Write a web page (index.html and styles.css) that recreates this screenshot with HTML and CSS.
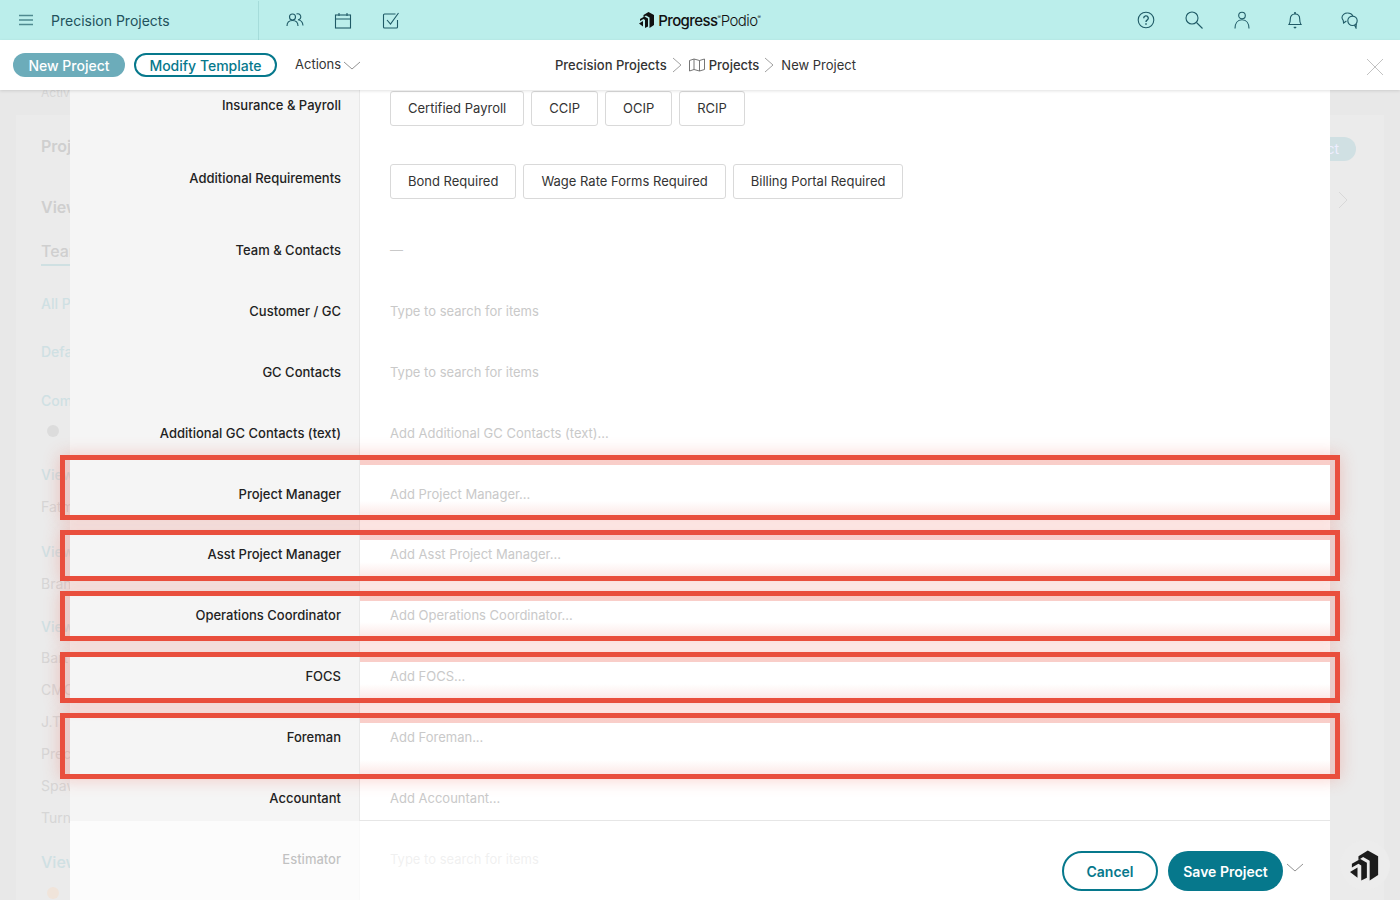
FILE: index.html
```html
<!DOCTYPE html>
<html lang="en">
<head>
    <meta name="viewport" content="width=device-width, initial-scale=1.0">
    <title>New Project</title>
    <link rel="stylesheet" href="styles.css">
</head>
<body>
    <div class="topbar">
        <div class="topbar-left">
            <div class="app-title">
                <svg class="ico" width="16" height="12" viewBox="0 0 16 12"><path d="M1 1.5h14M1 6h14M1 10.5h14" stroke="#4f8a90" stroke-width="1.6" fill="none"/></svg>
                <span>Precision Projects</span>
            </div>
            <div class="top-icons">
                <svg width="18" height="16" viewBox="0 0 18 16" fill="none" stroke="#1f5a66" stroke-width="1.1"><circle cx="6.5" cy="5" r="3"/><path d="M1 14c0-4 2-5.500 5.500-5.500S12 10 12 14"/><path d="M10.500 2.100a3 3 0 1 1 1.500 5.700c3 .4 4.700 2 5 5.700"/></svg>
                <svg width="18" height="17" viewBox="0 0 18 17" fill="none" stroke="#1f5a66" stroke-width="1.100"><rect x="1.500" y="3" width="15" height="13"/><path d="M1.500 7h15M5 1v3M13 1v3"/></svg>
                <svg width="18" height="17" viewBox="0 0 18 17" fill="none" stroke="#1f5a66" stroke-width="1.100"><path d="M15.500 8v7a1 1 0 0 1-1 1h-12a1 1 0 0 1-1-1V3a1 1 0 0 1 1-1h11"/><path d="M5 8l3.500 4L16.500 1"/></svg>
            </div>
        </div>
        <div class="brand">
            <svg width="16" height="16" viewBox="0 0 32 32"><path fill="#111" d="M9 6l10-6 11 6v20l-9 6V11L14 7l-5 3zM2 14l9-5 7 4v16l-6 3V16l-3-2-7 4zM0 23l8-5v11z"/></svg>
            <span class="brand-main">Progress</span><span class="brand-sup">&reg;</span><span class="brand-sub">Podio</span><span class="brand-sup light">&reg;</span>
        </div>
        <div class="top-right">
            <svg class="q" width="18" height="18" viewBox="0 0 18 18" fill="none" stroke="#1f5a66" stroke-width="1.100"><circle cx="9" cy="9" r="7.800"/><path d="M6.700 7.200a2.300 2.300 0 1 1 3.400 2c-.8.500-1.100.8-1.100 1.800" stroke-width="1.400"/><path d="M9 12.300v1.500" stroke-width="1.500"/></svg>
            <svg class="s" width="18" height="18" viewBox="0 0 18 18" fill="none" stroke="#1f5a66" stroke-width="1.100"><circle cx="7" cy="7" r="6"/><path d="M11.500 11.500l6 6"/></svg>
            <svg class="u" width="16" height="18" viewBox="0 0 16 18" fill="none" stroke="#1f5a66" stroke-width="1.100"><circle cx="8" cy="4.500" r="3.300"/><path d="M1 17.500c0-5 2.500-8.700 7-8.700s7 3.700 7 8.700"/></svg>
            <svg class="b" width="14" height="18" viewBox="0 0 14 18" fill="none" stroke="#1f5a66" stroke-width="1.100"><path d="M1 13.500c1.200-1.500 1.300-3 1.300-5.500C2.300 5 4 3 7 3s4.700 2 4.700 5c0 2.500.1 4 1.300 5.500z"/><path d="M7 1v2" stroke-width="1.600"/><path d="M5.800 15.800L7 17l1.200-1.200"/></svg>
            <svg class="c" width="18" height="17" viewBox="0 0 18 17" fill="none" stroke="#1f5a66" stroke-width="1.100"><path d="M6.500 1C3.500 1 1 3 1 5.500c0 1.200.5 2 1.200 2.800L2.600 11l2.800-2"/><path d="M6.500 1c2.500 0 4.500 1.200 5.300 3"/><circle cx="11.500" cy="8.800" r="4.700"/><path d="M13.500 13l1.500 3 .3-4"/></svg>
        </div>
    </div>

    <div class="subbar">
        <div class="sub-left">
            <button class="pill pill-muted">New Project</button>
            <button class="pill pill-outline">Modify Template</button>
            <div class="actions">
                <span>Actions</span>
                <svg width="16" height="9" viewBox="0 0 16 9" fill="none" stroke="#777" stroke-width=".8"><path d="M0 1l8 7 8-7"/></svg>
            </div>
        </div>
        <div class="crumbs">
            <span class="crumb-strong">Precision Projects</span>
            <svg class="crumb-sep" width="10" height="16" viewBox="0 0 10 16" fill="none" stroke="#888" stroke-width=".8"><path d="M1 1l8 7-8 7"/></svg>
            <svg width="16" height="14" viewBox="0 0 16 14" fill="none" stroke="#666" stroke-width=".9"><path d="M.5 2.500L5 1l5.500 1.500L15.500 1v10.500L10.500 13 5 11.500.5 13zM5 1v10.500M10.500 2.500V13"/></svg>
            <span class="crumb-strong">Projects</span>
            <svg class="crumb-sep" width="10" height="16" viewBox="0 0 10 16" fill="none" stroke="#888" stroke-width=".8"><path d="M1 1l8 7-8 7"/></svg>
            <span class="crumb-last">New Project</span>
        </div>
        <svg class="close" width="16" height="16" viewBox="0 0 16 16" stroke="#bbb" stroke-width=".9"><path d="M0 0l16 16M16 0L0 16"/></svg>
    </div>

    <div class="under">
        <p class="u-active">Active</p>
        <p class="u-h u-proj">Project</p>
        <p class="u-h u-view1">View</p>
        <p class="u-team">Team</p>
        <p class="u-link u-all">All Projects</p>
        <p class="u-link u-default">Default</p>
        <p class="u-link u-com">Completed</p>
        <span class="u-dot u-dot1"></span>
        <p class="u-link u-v2">View</p>
        <p class="u-item u-i1">Fatma</p>
        <p class="u-link u-v3">View</p>
        <p class="u-item u-i2">Brandon</p>
        <p class="u-link u-v4">View</p>
        <p class="u-item u-i3">Bart</p>
        <p class="u-item u-i4">CMC</p>
        <p class="u-item u-i5">J.T.</p>
        <p class="u-item u-i6">Precision</p>
        <p class="u-item u-i7">Spawn</p>
        <p class="u-item u-i8">Turner</p>
        <p class="u-link u-v5">View</p>
        <span class="u-dot u-dot2"></span>
        <span class="u-pill">Project</span>
        <svg class="u-chev" width="10" height="18" viewBox="0 0 10 18" fill="none" stroke="#d8d8d8"><path d="M1 1l8 8-8 8"/></svg>
    </div>

    <div class="sheet">
        <div class="form">
            <div class="row row-tall first">
                <div class="label">Insurance &amp; Payroll</div>
                <div class="value chips">
                    <span class="chip">Certified Payroll</span>
                    <span class="chip">CCIP</span>
                    <span class="chip">OCIP</span>
                    <span class="chip">RCIP</span>
                </div>
            </div>
            <div class="row row-tall second">
                <div class="label">Additional Requirements</div>
                <div class="value chips">
                    <span class="chip">Bond Required</span>
                    <span class="chip">Wage Rate Forms Required</span>
                    <span class="chip">Billing Portal Required</span>
                </div>
            </div>
            <div class="row">
                <div class="label">Team &amp; Contacts</div>
                <div class="value ph">&mdash;</div>
            </div>
            <div class="row">
                <div class="label">Customer / GC</div>
                <div class="value ph">Type to search for items</div>
            </div>
            <div class="row">
                <div class="label">GC Contacts</div>
                <div class="value ph">Type to search for items</div>
            </div>
            <div class="row">
                <div class="label">Additional GC Contacts (text)</div>
                <div class="value ph">Add Additional GC Contacts (text)...</div>
            </div>
            <div class="row row-60">
                <div class="label">Project Manager</div>
                <div class="value ph">Add Project Manager...</div>
            </div>
            <div class="row">
                <div class="label">Asst Project Manager</div>
                <div class="value ph">Add Asst Project Manager...</div>
            </div>
            <div class="row">
                <div class="label">Operations Coordinator</div>
                <div class="value ph">Add Operations Coordinator...</div>
            </div>
            <div class="row">
                <div class="label">FOCS</div>
                <div class="value ph">Add FOCS...</div>
            </div>
            <div class="row">
                <div class="label">Foreman</div>
                <div class="value ph">Add Foreman...</div>
            </div>
            <div class="row">
                <div class="label">Accountant</div>
                <div class="value ph">Add Accountant...</div>
            </div>
            <div class="row row-last">
                <div class="label">Estimator</div>
                <div class="value ph">Type to search for items</div>
            </div>
        </div>
        <div class="footer">
            <button class="foot-btn foot-cancel">Cancel</button>
            <button class="foot-btn foot-save">Save Project</button>
            <svg width="16" height="9" viewBox="0 0 16 9" fill="none" stroke="#777" stroke-width=".8"><path d="M0 1l8 7 8-7"/></svg>
        </div>
    </div>

    <div class="mark mark1"></div>
    <div class="mark mark2"></div>
    <div class="mark mark3"></div>
    <div class="mark mark4"></div>
    <div class="mark mark5"></div>

    <div class="launcher">
        <svg width="30" height="31" viewBox="0 0 32 32"><path fill="#1c1c1c" d="M9 6l10-6 11 6v20l-9 6V11L14 7l-5 3zM2 14l9-5 7 4v16l-6 3V16l-3-2-7 4zM0 23l8-5v11z"/></svg>
    </div>
</body>
</html>
```

FILE: styles.css
```css
*{
    margin: 0;
    padding: 0;
    box-sizing: border-box;
    font-family: "Inter", "Liberation Sans", sans-serif;
}
html, body{
    height: 100%;
    overflow: hidden;
}
body{
    background: #e8e8e8;
    position: relative;
}
button{
    border: 0;
    background: none;
}

/* top bar */
.topbar{
    height: 40px;
    background: #bbeeeb;
    display: grid;
    grid-template-columns: 1fr auto 1fr;
    align-items: center;
    position: relative;
    z-index: 3;
}
.topbar-left{
    display: flex;
    align-items: center;
    height: 40px;
}
.app-title{
    width: 259px;
    height: 39px;
    display: flex;
    align-items: center;
    padding-left: 18px;
    border-right: 1px solid #a5dcda;
    font-size: 14px;
    color: #22525c;
}
.app-title span{
    margin-left: 17px;
}
.top-icons{
    display: flex;
    align-items: center;
    gap: 30px;
    padding-left: 27px;
}
.brand{
    display: flex;
    align-items: center;
    color: #111;
}
.brand-main{
    font-size: 15px;
    font-weight: 500;
    letter-spacing: -.6px;
    margin-left: 3px;
}
.brand-sub{
    font-size: 15px;
    font-weight: 300;
    letter-spacing: -.6px;
}
.brand-sup{
    font-size: 5px;
    align-self: flex-start;
    margin-top: 3px;
}
.top-right{
    display: flex;
    align-items: center;
    justify-content: flex-end;
    padding-right: 41px;
}
.top-right .q{ margin-right: 30px; }
.top-right .s{ margin-right: 31px; }
.top-right .u{ margin-right: 38px; }
.top-right .b{ margin-right: 39px; }

/* second bar */
.subbar{
    height: 50px;
    background: #fff;
    display: flex;
    align-items: center;
    padding: 0 17px 0 13px;
    box-shadow: 0 1px 3px rgba(0,0,0,.12);
    position: relative;
    z-index: 3;
}
.sub-left{
    width: 542px;
    display: flex;
    align-items: center;
}
.pill{
    height: 24px;
    border-radius: 12px;
    font-size: 14px;
    font-weight: 500;
}
.pill-muted{
    width: 112px;
    background: #6cacba;
    color: #fff;
}
.pill-outline{
    width: 143px;
    margin-left: 9px;
    border: 2px solid #06788c;
    color: #06788c;
}
.actions{
    display: flex;
    align-items: center;
    margin-left: 18px;
    font-size: 13px;
    color: #333;
    padding-bottom: 2px;
}
.actions svg{
    margin-left: 3px;
    margin-top: 3px;
}
.crumbs{
    display: flex;
    align-items: center;
    font-size: 13px;
    color: #333;
}
.crumb-strong{
    font-weight: 500;
}
.crumb-sep{
    margin: 0 7px 0 5px;
}
.crumbs .crumb-strong + .crumb-sep + svg + .crumb-strong{
    margin-left: 4px;
}
.crumb-last{
    margin-left: 0;
}
.close{
    margin-left: auto;
    margin-top: 3px;
}

/* blurred page behind the sheet */
.under p, .under span, .under svg{
    position: absolute;
}
.under{
    position: absolute;
    inset: 90px 0 0 0;
}
.under::before{
    content: "";
    position: absolute;
    left: 16px;
    right: 16px;
    top: 25px;
    bottom: 0;
    background: #ebebeb;
}
.under p{
    left: 41px;
    font-size: 14px;
    line-height: 18px;
    color: #d6d6d6;
}
.u-active{ top: -6px; font-size: 12px !important; }
.u-h{
    font-size: 16px !important;
    font-weight: 600;
    color: #cfcfcf !important;
}
.u-proj{ top: 47px; }
.u-view1{ top: 108px; }
.u-team{
    top: 152px;
    font-size: 16px !important;
    font-weight: 500;
    color: #cfcfcf !important;
    padding-bottom: 4px;
    border-bottom: 2px solid #cfe0e2;
}
.u-link{
    color: #cfe0e3 !important;
    font-weight: 500;
}
.u-all{ top: 205px; }
.u-default{ top: 253px; }
.u-com{ top: 302px; }
.u-v2{ top: 376px; }
.u-i1{ top: 408px; }
.u-v3{ top: 453px; }
.u-i2{ top: 485px; }
.u-v4{ top: 528px; }
.u-i3{ top: 559px; }
.u-i4{ top: 591px; }
.u-i5{ top: 623px; }
.u-i6{ top: 655px; }
.u-i7{ top: 687px; }
.u-i8{ top: 719px; }
.u-v5{ top: 763px; font-size: 16px !important; }
.u-dot{
    left: 47px;
    width: 12px;
    height: 12px;
    border-radius: 50%;
}
.u-dot1{ top: 335px; background: #dcdcdc; }
.u-dot2{ top: 797px; background: #f0e4da; }
.u-pill{
    left: 1270px;
    top: 47px;
    width: 86px;
    height: 24px;
    border-radius: 12px;
    background: #d0e0e3;
    color: #eef;
    font-size: 14px;
    line-height: 24px;
    text-align: right;
    padding-right: 17px;
}
.u-chev{
    left: 1338px;
    top: 101px;
}

/* the form sheet */
.sheet{
    position: absolute;
    left: 70px;
    width: 1260px;
    top: 90px;
    bottom: 0;
    overflow: hidden;
    background: #fff;
    z-index: 1;
}
.form{
    margin-top: -23px;
}
.row{
    display: grid;
    grid-template-columns: 290px 1fr;
    height: 61px;
    font-size: 13px;
    line-height: 20px;
}
.row-tall.first{ height: 73px; }
.row-tall.second{ height: 72px; }
.row-60{ height: 60px; }
.row-last{
    border-top: 1px solid #e6e6e6;
    height: 80px;
    margin-top: -1px;
}
.label{
    background: #f5f5f5;
    border-right: 1px solid #e8e8e8;
    padding: 28px 18px 0 0;
    text-align: right;
    font-weight: 500;
    color: #222;
}
.value{
    padding: 28px 0 0 30px;
}
.ph{
    color: #c9c9c9;
}
.chips{
    display: flex;
    align-items: flex-start;
    gap: 7px;
    padding-top: 24px;
}
.chip{
    height: 35px;
    line-height: 32px;
    padding: 0 17px;
    border: 1px solid #d9d9d9;
    border-radius: 3px;
    color: #333;
    background: #fff;
}
.footer{
    position: absolute;
    left: 0;
    right: 0;
    bottom: 0;
    height: 79px;
    background: rgba(255,255,255,.72);
    display: flex;
    align-items: flex-start;
    justify-content: flex-end;
    padding: 30px 27px 0 0;
}
.foot-btn{
    height: 40px;
    border-radius: 20px;
    font-size: 14px;
    font-weight: 600;
}
.foot-cancel{
    width: 96px;
    border: 2px solid #06788c;
    color: #06788c;
    background: #fff;
}
.foot-save{
    width: 115px;
    margin-left: 10px;
    background: #06788c;
    color: #fff;
}
.footer svg{
    margin: 12px 0 0 4px;
}

/* red annotation boxes */
.mark{
    position: absolute;
    left: 60px;
    width: 1280px;
    border: 5px solid #e94f3d;
    box-shadow: 0 0 16px rgba(233,79,61,.28);
    z-index: 2;
    background:
        linear-gradient(rgba(233,79,61,.28), rgba(233,79,61,.28)) 295px 0 / 970px 5px no-repeat,
        linear-gradient(rgba(233,79,61,0), rgba(233,79,61,.12)) 295px 100% / 970px 14px no-repeat,
        linear-gradient(rgba(233,79,61,.2), rgba(233,79,61,.2)) 0 0 / 5px 100% no-repeat,
        linear-gradient(rgba(233,79,61,.2), rgba(233,79,61,.2)) 100% 0 / 5px 100% no-repeat;
}
.mark1{ top: 455px; height: 65px; }
.mark2{ top: 530px; height: 51px; }
.mark3{ top: 591px; height: 50px; }
.mark4{ top: 652px; height: 51px; }
.mark5{ top: 713px; height: 66px; }

.launcher{
    position: absolute;
    left: 1340px;
    top: 840px;
    width: 50px;
    height: 50px;
    border-radius: 50%;
    background: #ececec;
    display: flex;
    align-items: center;
    justify-content: center;
    z-index: 4;
}
```
